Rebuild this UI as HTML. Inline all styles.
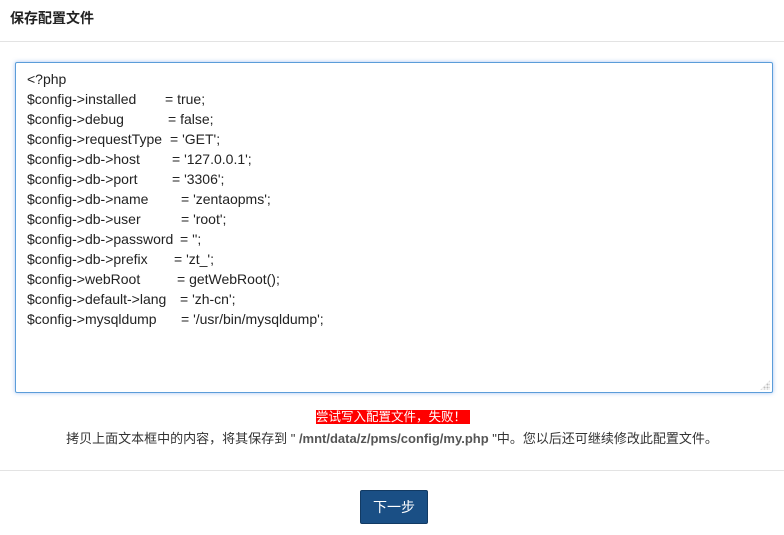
<!DOCTYPE html>
<html><head><meta charset="utf-8"><style>
body{margin:0;width:784px;height:535px;background:#fff;font-family:"Liberation Sans","Noto Sans CJK SC",sans-serif;color:#333;position:relative;overflow:hidden}
.h{position:absolute;left:10px;top:8px;font-size:14px;font-weight:bold;color:#222}
.hr1{position:absolute;left:0;right:0;top:41px;border-top:1px solid #e3e3e3}
.ta{position:absolute;left:15px;top:62px;width:756px;height:329px;border:1px solid #5b9dd9;box-shadow:0 0 4px rgba(80,140,230,.5);border-radius:2px}
.l{position:absolute;left:27px;font-size:14px;color:#222;white-space:pre;line-height:16px}
.e{position:absolute;font-size:14px;color:#222;white-space:pre;line-height:16px}
.err{position:absolute;left:316px;top:410px;width:154px;height:14px;background:#f00;color:#fff;font-size:12.5px;line-height:14px;white-space:nowrap;overflow:hidden}
.msg{position:absolute;left:0;width:784px;top:428px;text-align:center;font-size:13px;color:#333}
.hr2{position:absolute;left:0;right:0;top:470px;border-top:1px solid #e3e3e3}
.btn{position:absolute;left:360px;top:490px;width:66px;height:32px;background:#1a4f85;border:1px solid #123a63;border-radius:2px;color:#fff;font-size:14px;line-height:32px;text-align:center}
.rz{position:absolute;left:760px;top:380px;width:10px;height:10px;background:radial-gradient(circle,#bbb 1px,transparent 1.2px) 0 0/3px 3px;clip-path:polygon(100% 0,100% 100%,0 100%)}
</style></head><body>
<div class="h">保存配置文件</div>
<div class="hr1"></div>
<div class="ta"></div>
<div class="rz"></div>
<div class="l" style="top:71px">&lt;?php</div>
<div class="l" style="top:91px">$config-&gt;installed</div><div class="e" style="left:165px;top:91px">= true;</div>
<div class="l" style="top:111px">$config-&gt;debug</div><div class="e" style="left:168px;top:111px">= false;</div>
<div class="l" style="top:131px">$config-&gt;requestType</div><div class="e" style="left:170px;top:131px">= 'GET';</div>
<div class="l" style="top:151px">$config-&gt;db-&gt;host</div><div class="e" style="left:172px;top:151px">= '127.0.0.1';</div>
<div class="l" style="top:171px">$config-&gt;db-&gt;port</div><div class="e" style="left:172px;top:171px">= '3306';</div>
<div class="l" style="top:191px">$config-&gt;db-&gt;name</div><div class="e" style="left:181px;top:191px">= 'zentaopms';</div>
<div class="l" style="top:211px">$config-&gt;db-&gt;user</div><div class="e" style="left:181px;top:211px">= 'root';</div>
<div class="l" style="top:231px">$config-&gt;db-&gt;password</div><div class="e" style="left:180px;top:231px">= '';</div>
<div class="l" style="top:251px">$config-&gt;db-&gt;prefix</div><div class="e" style="left:174px;top:251px">= 'zt_';</div>
<div class="l" style="top:271px">$config-&gt;webRoot</div><div class="e" style="left:177px;top:271px">= getWebRoot();</div>
<div class="l" style="top:291px">$config-&gt;default-&gt;lang</div><div class="e" style="left:180px;top:291px">= 'zh-cn';</div>
<div class="l" style="top:311px">$config-&gt;mysqldump</div><div class="e" style="left:181px;top:311px">= '/usr/bin/mysqldump';</div>
<div class="err">尝试写入配置文件，失败！</div>
<div class="msg">拷贝上面文本框中的内容，将其保存到 " <b style="color:#555">/mnt/data/z/pms/config/my.php</b> "中。您以后还可继续修改此配置文件。</div>
<div class="hr2"></div>
<div class="btn">下一步</div>
</body></html>
